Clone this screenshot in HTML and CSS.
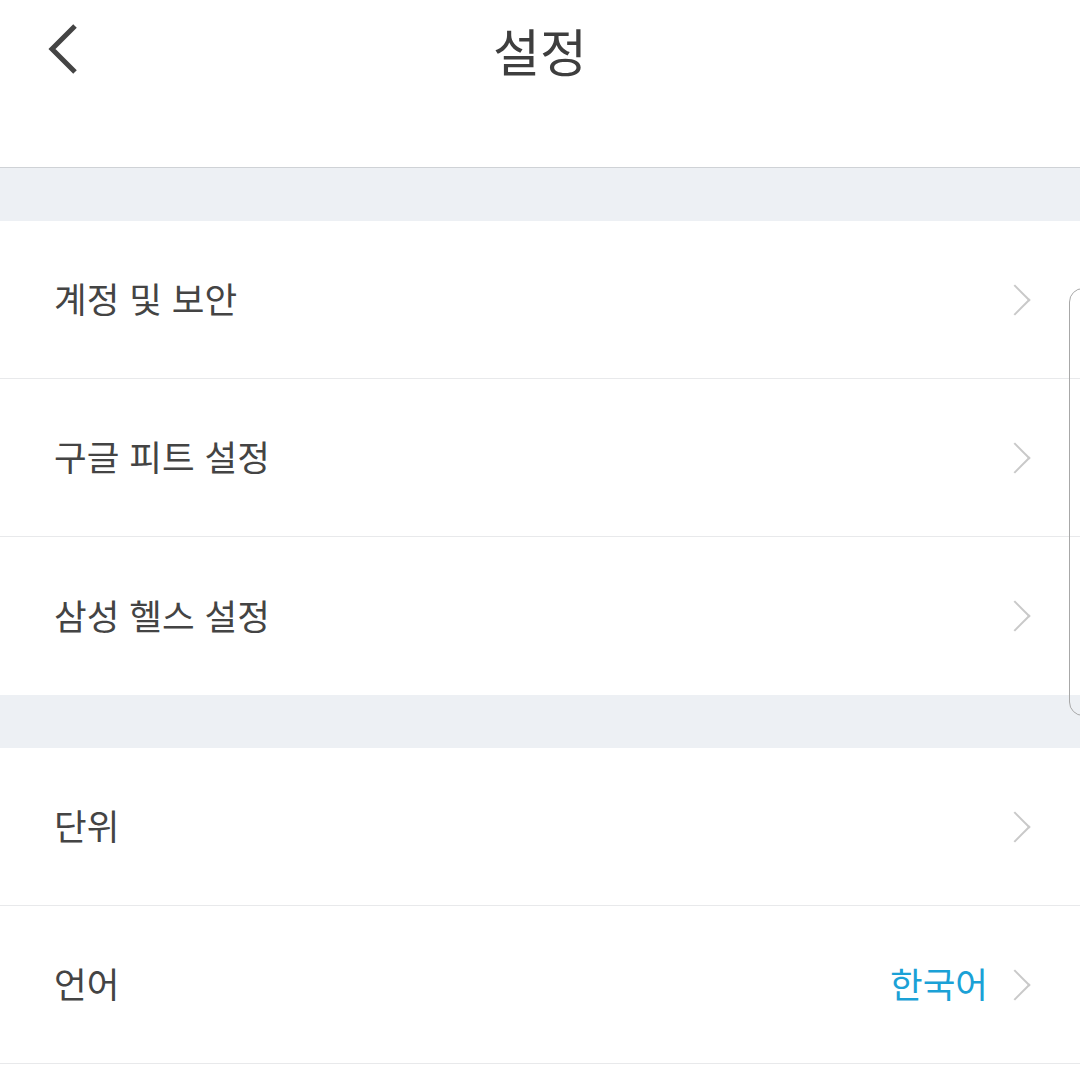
FILE: index.html
```html
<!DOCTYPE html>
<html lang="ko">
<head>
<meta charset="UTF-8">
<meta name="viewport" content="width=device-width, initial-scale=1.0">
<title>설정</title>
<link rel="stylesheet" href="styles.css">
</head>
<body>
  <div class="header">
    <svg class="back" width="34" height="54" viewBox="0 0 34 54">
      <path d="M29 4 L6 27 L29 50" fill="none" stroke="#444" stroke-width="5"/>
    </svg>
    <h1>설정</h1>
  </div>

  <div class="band"></div>

  <div class="row"><span class="label">계정 및 보안</span><span class="chev"></span></div>
  <div class="row"><span class="label">구글 피트 설정</span><span class="chev"></span></div>
  <div class="row last"><span class="label">삼성 헬스 설정</span><span class="chev"></span></div>

  <div class="band"></div>

  <div class="row"><span class="label">단위</span><span class="chev"></span></div>
  <div class="row"><span class="label">언어</span><span class="value">한국어</span><span class="chev"></span></div>

  <div class="scroll"></div>
</body>
</html>
```

FILE: styles.css
```css
body {
  margin: 0;
  background: #fff;
  font-family: "Noto Sans CJK KR", "Noto Sans", sans-serif;
  color: #444;
}

.header {
  height: 167px;
  border-bottom: 1px solid #cfd2d6;
  position: relative;
  text-align: center;
}
.header h1 {
  margin: 0;
  padding-top: 18px;
  font-size: 51px;
  font-weight: 400;
  line-height: 64px;
  color: #3e3e3e;
}
.back {
  position: absolute;
  left: 46px;
  top: 22px;
}

.band {
  height: 53px;
  background: #edf0f4;
}

.row {
  height: 157px;
  border-bottom: 1px solid #e8e9eb;
  display: flex;
  align-items: center;
  padding: 0 48px 0 54px;
}
.row.last {
  height: 158px;
  border-bottom: none;
}
.label {
  flex: 1;
  font-size: 35.5px;
  color: #444;
  padding-bottom: 4px;
}
.value {
  font-size: 35.5px;
  color: #1ba1d6;
  margin-right: 16px;
  padding-bottom: 4px;
}
.chev {
  width: 20px;
  height: 20px;
  border-top: 2px solid #c9c9c9;
  border-right: 2px solid #c9c9c9;
  transform: rotate(45deg);
  margin-right: 6px;
}

.scroll {
  position: absolute;
  left: 1069px;
  top: 288px;
  width: 40px;
  height: 426px;
  border: 1.5px solid #a8a8a8;
  border-radius: 14px;
}
```
